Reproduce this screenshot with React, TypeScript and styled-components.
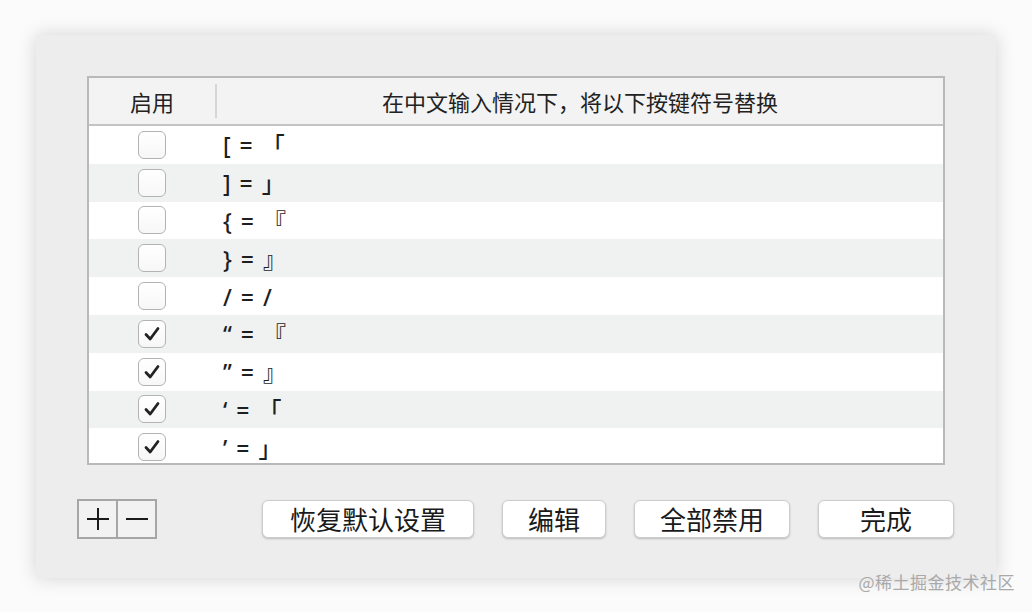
import React from 'react';
import styled, { createGlobalStyle } from 'styled-components';

const GlobalStyle = createGlobalStyle`
    html, body {
        margin: 0;
        padding: 0;
        background: #fbfbfb;
    }
    body {
        font-family: "Noto Sans CJK SC", "Noto Sans", sans-serif;
        color: #222;
    }
`;

const Page = styled.div`
    position: relative;
    width: 1032px;
    height: 612px;
    padding: 35px 0 0 36px;
    box-sizing: border-box;
`;

const Panel = styled.div`
    width: 960px;
    height: 543px;
    box-sizing: border-box;
    background: #ededed;
    box-shadow: 0 0 18px rgba(0, 0, 0, 0.16);
    padding: 41px 42px 0 41px;
    display: flex;
    flex-direction: column;
`;

const Table = styled.div`
    margin: 0 9px 0 10px;
    height: 389px;
    box-sizing: border-box;
    border: 2px solid #b9b9b9;
    background: #fff;
    display: flex;
    flex-direction: column;
    overflow: hidden;
`;

const HeaderRow = styled.div`
    flex: none;
    height: 46px;
    display: grid;
    grid-template-columns: 128px 1fr;
    align-items: center;
    background: #f3f3f3;
    border-bottom: 2px solid #c4c4c4;
    font-size: 22px;
    line-height: 1;
`;

const HeaderCell = styled.div<{ $divider?: boolean }>`
    height: 34px;
    display: flex;
    align-items: center;
    justify-content: center;
    border-right: ${(p) => (p.$divider ? '2px solid #d6d6d6' : 'none')};
`;

const Body = styled.div`
    flex: 1;
    overflow: hidden;
`;

const Row = styled.div<{ $alt: boolean }>`
    height: 37.8px;
    display: grid;
    grid-template-columns: 128px 1fr;
    align-items: center;
    background: ${(p) => (p.$alt ? '#f0f1f1' : '#ffffff')};
`;

const CheckCell = styled.div`
    display: flex;
    justify-content: center;
    padding-right: 2px;
`;

const Box = styled.div`
    width: 28px;
    height: 28px;
    box-sizing: border-box;
    border: 1.5px solid #b3b3b3;
    border-radius: 6px;
    background: linear-gradient(#ffffff, #f7f7f7);
    display: flex;
    align-items: center;
    justify-content: center;
`;

const Mapping = styled.div`
    padding-left: 6px;
    padding-top: 2px;
    font-family: "Noto Sans", "Noto Sans CJK SC", sans-serif;
    font-size: 23px;
    font-weight: 500;
    letter-spacing: 1.5px;
    line-height: 1;
    white-space: pre;
    color: #1e1e1e;
`;

const Footer = styled.div`
    margin-top: 34px;
    display: flex;
    align-items: center;
    gap: 28px;
`;

const PlusMinus = styled.div`
    display: flex;
    border: 2px solid #a6a6a6;
    height: 40px;
    box-sizing: border-box;
    margin-right: 77px;
`;

const PMButton = styled.div<{ $first?: boolean }>`
    width: 37px;
    display: flex;
    align-items: center;
    justify-content: center;
    background: #f2f2f2;
    border-right: ${(p) => (p.$first ? '2px solid #a6a6a6' : 'none')};
`;

const Button = styled.button<{ $w: number }>`
    flex: none;
    width: ${(p) => p.$w}px;
    height: 38px;
    border: 1px solid #cdcdcd;
    border-radius: 6px;
    background: #fff;
    box-shadow: 0 1px 2px rgba(0, 0, 0, 0.22);
    font-family: "Noto Sans CJK SC", sans-serif;
    font-size: 26px;
    line-height: 1;
    color: #1a1a1a;
    padding: 0;
    display: flex;
    align-items: center;
    justify-content: center;
`;

const Watermark = styled.div`
    position: absolute;
    right: 17px;
    bottom: 18px;
    font-family: "Noto Sans CJK SC", sans-serif;
    font-size: 17px;
    color: #a9a9a9;
    letter-spacing: 0.5px;
`;

const rows = [
    { text: '[ = 「', on: false },
    { text: '] = 」', on: false },
    { text: '{ = 『', on: false },
    { text: '} = 』', on: false },
    { text: '/ = /', on: false },
    { text: '“ = 『', on: true },
    { text: '” = 』', on: true },
    { text: '‘ = 「', on: true },
    { text: '’ = 」', on: true },
];

const Check = () => (
    <svg width="18" height="18" viewBox="0 0 18 18">
        <path d="M3 9.5 L7.2 14 L15 3.5" fill="none" stroke="#222" strokeWidth="2.8" strokeLinecap="round" strokeLinejoin="round" />
    </svg>
);

const PlusIcon = () => (
    <svg width="24" height="24" viewBox="0 0 24 24">
        <path d="M12 1 V23 M1 12 H23" stroke="#1a1a1a" strokeWidth="2" />
    </svg>
);

const MinusIcon = () => (
    <svg width="24" height="24" viewBox="0 0 24 24">
        <path d="M1 12 H23" stroke="#1a1a1a" strokeWidth="2" />
    </svg>
);

const App: React.FC = () => {
    return (
        <>
            <GlobalStyle />
            <Page>
                <Panel>
                    <Table>
                        <HeaderRow>
                            <HeaderCell $divider>启用</HeaderCell>
                            <HeaderCell>在中文输入情况下，将以下按键符号替换</HeaderCell>
                        </HeaderRow>
                        <Body>
                            {rows.map((r, i) => (
                                <Row key={i} $alt={i % 2 === 1}>
                                    <CheckCell>
                                        <Box>{r.on && <Check />}</Box>
                                    </CheckCell>
                                    <Mapping>{r.text}</Mapping>
                                </Row>
                            ))}
                        </Body>
                    </Table>
                    <Footer>
                        <PlusMinus>
                            <PMButton $first>
                                <PlusIcon />
                            </PMButton>
                            <PMButton>
                                <MinusIcon />
                            </PMButton>
                        </PlusMinus>
                        <Button $w={212}>恢复默认设置</Button>
                        <Button $w={104}>编辑</Button>
                        <Button $w={156}>全部禁用</Button>
                        <Button $w={136}>完成</Button>
                    </Footer>
                </Panel>
                <Watermark>@稀土掘金技术社区</Watermark>
            </Page>
        </>
    );
};

export default App;
